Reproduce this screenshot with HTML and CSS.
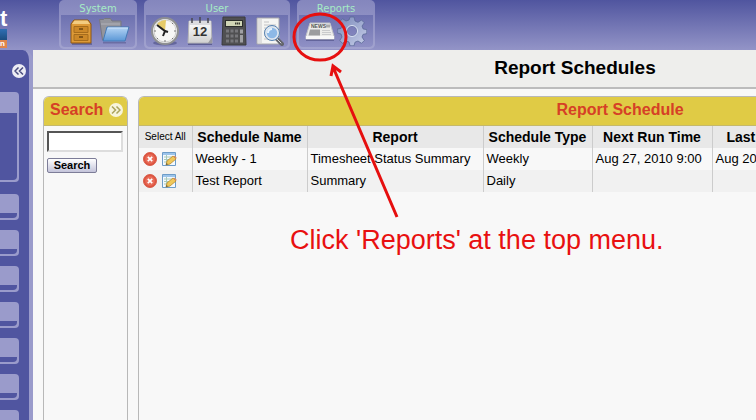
FILE: index.html
```html
<!DOCTYPE html>
<html lang="en">
<head>
    <meta charset="UTF-8">
    <meta name="viewport" content="width=device-width, initial-scale=1.0">
    <title>Report Schedules</title>
    <link rel="stylesheet" href="styles.css">
</head>
<body>
    <svg class="defs" width="0" height="0" aria-hidden="true">
        <defs>
            <linearGradient id="blue" x1="0" y1="0" x2="0" y2="1"><stop offset="0" stop-color="#b5d5f5"/><stop offset="1" stop-color="#5a97d6"/></linearGradient>
            <linearGradient id="grey" x1="0" y1="0" x2="0" y2="1"><stop offset="0" stop-color="#ffffff"/><stop offset="1" stop-color="#d0d0d0"/></linearGradient>
            <linearGradient id="gear" x1="0" y1="0" x2="1" y2="1"><stop offset="0" stop-color="#7787b8"/><stop offset="1" stop-color="#c9d0ea"/></linearGradient>
            <radialGradient id="red"><stop offset="0" stop-color="#ee5a48"/><stop offset="0.6" stop-color="#e8705c"/><stop offset="1" stop-color="#d8402c"/></radialGradient>
            <symbol id="delete" viewBox="0 0 16 16">
                <circle cx="8" cy="8" r="6.5" fill="url(#red)" stroke="#d9604c"/>
                <path d="M5.8 5.8l4.4 4.4M10.2 5.8l-4.4 4.4" stroke="#fff" stroke-width="1.8"/>
            </symbol>
            <symbol id="edit" viewBox="0 0 16 16">
                <path d="M1.5 1.5h13v13h-13z" fill="#f3f9ff" stroke="#6d9cc8"/>
                <path d="M2 2h12v2H2z" fill="#9cc4ea"/>
                <path d="M3 6h9M3 8.5h9M3 11h5M5.5 4v9" stroke="#a9c9b8"/>
                <path d="M5 14l1-4 6-5 3 3-6 5z" fill="#f0c85a" stroke="#b98a2b" stroke-width=".8"/>
                <path d="M5 14l.6-2 1.4 1.3z" fill="#554"/>
                <path d="M12 5l3 3 .7-1.3-2-2z" fill="#d98d62"/>
            </symbol>
        </defs>
    </svg>

    <header class="topbar">
        <div class="logo">
            <div class="logo-name">t</div>
            <div class="logo-blue"></div>
            <div class="logo-orange">n</div>
        </div>
        <nav class="menu">
            <section class="group">
                <h2>System</h2>
                <div class="icons">
                    <a href="#" aria-label="Administration">
                        <svg width="30" height="30" viewBox="0 0 30 30">
                            <path d="M6 27h20v2H6z" fill="#4b4f86" opacity=".6"/>
                            <path d="M8 4h14l3 4v19H5V8z" fill="#dd9a38" stroke="#8d5712"/>
                            <path d="M8.500 4.500h13l2.500 3.500H6z" fill="#f3cc80"/>
                            <path d="M8 10.500h14v6H8zM8 18.500h14v6H8z" fill="#cc8828" stroke="#a66c1c"/>
                            <path d="M13 13h4M13 21h4" stroke="#6d4510" stroke-width="1.500"/>
                        </svg>
                    </a>
                    <a href="#" aria-label="Files">
                        <svg width="32" height="30" viewBox="0 0 32 30">
                            <path d="M5 26h23v1.500H5z" fill="#4b4f86" opacity=".5"/>
                            <path d="M1.500 3.500h4l1-1h6l1.500 2.500h9v19H4.500z" fill="#94959c" stroke="#777880"/>
                            <path d="M3 8h19" stroke="#b0b1b8"/>
                            <path d="M9 11h22l-4 14H5z" fill="url(#blue)" stroke="#4479b5"/>
                            <path d="M10 12h20" stroke="#cfe4fa"/>
                        </svg>
                    </a>
                </div>
            </section>
            <section class="group">
                <h2>User</h2>
                <div class="icons wide">
                    <a href="#" aria-label="Timesheet">
                        <svg width="30" height="30" viewBox="0 0 30 30">
                            <ellipse cx="15" cy="27" rx="12" ry="2.500" fill="#3d4075" opacity=".5"/>
                            <circle cx="15" cy="15" r="13" fill="#f0f0ee" stroke="#8f9092" stroke-width="2"/>
                            <circle cx="15" cy="15" r="11" fill="#f7f7f5" stroke="#cfcfcf"/>
                            <path d="M15 15L7 8q4-4 9-4z" fill="#e6cb68"/>
                            <path d="M7 9l8 6 3 1M15 15l-2 5" fill="none" stroke="#222" stroke-width="2"/>
                            <path d="M15 24v2M24 15h2M4 15h2M22 8l1-1M8 22l-1 1M22 22l1 1" stroke="#777"/>
                        </svg>
                    </a>
                    <a href="#" aria-label="Calendar">
                        <svg width="28" height="30" viewBox="0 0 28 30">
                            <path d="M2 27h24v2H2z" fill="#3d4075" opacity=".6"/>
                            <path d="M3 5h22l1 22H2z" fill="url(#grey)" stroke="#b5b5b8"/>
                            <path d="M3 5h22v4H3z" fill="#dcdce0"/>
                            <path d="M6 7V2M14 7V1M22 7V2" stroke="#4a4a50" stroke-width="1.500"/>
                            <path d="M26 21l-4 6h4z" fill="#9a9aa0"/>
                            <text x="14" y="20" class="day">12</text>
                        </svg>
                    </a>
                    <a href="#" aria-label="Calculator">
                        <svg width="28" height="30" viewBox="0 0 28 30">
                            <path d="M3 1h22l1 28H2z" fill="#505052" stroke="#3a3a3d"/>
                            <path d="M5 4h18v7H5z" fill="#2b2d2b"/>
                            <path d="M6 5h16v5H6z" fill="#d0d5b5"/>
                            <path d="M15 7.500h5" stroke="#34362b" stroke-width="2" stroke-dasharray="1.500 .5"/>
                            <path d="M6 15h12M6 20h12M6 25h12" stroke="#77777b" stroke-width="3" stroke-dasharray="3 1.500"/>
                            <path d="M20 13.500h3v4h-3zM20 19h3v7.500h-3z" fill="#a0a0a4"/>
                        </svg>
                    </a>
                    <a href="#" aria-label="Search records">
                        <svg width="30" height="30" viewBox="0 0 30 30">
                            <path d="M3 2h22v26H3z" fill="#f5f5f3" stroke="#a8a8ac"/>
                            <path d="M4 3h4v24H4z" fill="#dedede"/>
                            <path d="M10 6h5M10 9h12M10 12h5M10 15h3M10 19h2M10 23h5" stroke="#c3c3c5"/>
                            <path d="M22 22l6 6" stroke="#63656c" stroke-width="4" stroke-linecap="round"/>
                            <path d="M22 22l5 5" stroke="#d5d5d8" stroke-linecap="round"/>
                            <circle cx="18" cy="17" r="6.500" fill="#8db9e6" stroke="#dde5ee" stroke-width="2.500"/>
                            <circle cx="18" cy="17" r="7.500" fill="none" stroke="#5681b0"/>
                            <path d="M14 17q0-4 4-4" fill="none" stroke="#e6f3ff" stroke-width="2"/>
                        </svg>
                    </a>
                </div>
            </section>
            <section class="group">
                <h2>Reports</h2>
                <div class="icons">
                    <a href="#" aria-label="Reports">
                        <svg width="30" height="30" viewBox="0 0 30 30">
                            <path d="M1 23h28v2H1z" fill="#3d4075" opacity=".5"/>
                            <path d="M5 7h20l4 13v3H1v-3z" fill="#ececea" stroke="#c0c2c6"/>
                            <path d="M1 20h28v3H1z" fill="#f8f8f8"/>
                            <path d="M5 13.500h10v6H3.500z" fill="#9c9d9f"/>
                            <path d="M17 14.500h8M17 16.500h9M17 18.500h9" stroke="#c9cacc"/>
                            <text x="6" y="12" class="news">NEWS</text>
                            <path d="M21 10h4" stroke="#aaa" stroke-width="3"/>
                        </svg>
                    </a>
                    <a href="#" aria-label="Report settings">
                        <svg width="30" height="30" viewBox="-15 -15 30 30">
                            <path fill="url(#gear)" stroke="#5a6897" stroke-width=".8" fill-rule="evenodd" d="M-2-14h4l1 4 3 1.300 3.500-2.300 2.800 2.800L10-5l1.200 3 3.600.6v4L11 3.400 10 6l2.300 3.500-2.800 2.800L6 10l-3 1.200-1 3.600h-4L-3 11l-3-1-3.500 2.300-2.800-2.800L-10 6l-1-3-3.800-1v-4l3.800-.6L-10-6l-2.300-3.500 2.800-2.800L-6-10l3-1zM0-5a5 5 0 100 10 5 5 0 000-10z"/>
                            <circle r="5.500" fill="none" stroke="#dce3f5"/>
                        </svg>
                    </a>
                </div>
            </section>
        </nav>
    </header>

    <div class="page">
        <aside class="sidebar">
            <button class="round collapse" type="button" aria-label="Collapse sidebar">
                <svg width="10" height="8" viewBox="0 0 10 8"><path d="M4.500 0.500L1 4l3.500 3.500M9 0.500L5.500 4 9 7.500"/></svg>
            </button>
            <div class="box open"></div>
            <div class="box"></div>
            <div class="box"></div>
            <div class="box"></div>
            <div class="box"></div>
            <div class="box"></div>
            <div class="box"></div>
            <div class="box"></div>
        </aside>
        <main class="main">
            <h1>Report Schedules</h1>
            <div class="content">
                <form class="panel search">
                    <div class="panel-head">
                        <label for="search">Search</label>
                        <button class="round" type="button" aria-label="Expand search">
                            <svg width="10" height="8" viewBox="0 0 10 8"><path d="M1 0.500L4.500 4 1 7.500M5.500 0.500L9 4 5.500 7.500"/></svg>
                        </button>
                    </div>
                    <div class="search-body">
                        <input type="text" id="search" name="search">
                        <button class="submit" type="submit">Search</button>
                    </div>
                </form>
                <section class="panel report">
                    <h2 class="panel-head">Report Schedule</h2>
                    <table>
                        <colgroup>
                            <col class="col-select"><col class="col-name"><col class="col-report"><col class="col-type"><col class="col-next"><col>
                        </colgroup>
                        <thead>
                            <tr>
                                <th><a class="select-all" href="#">Select All</a></th>
                                <th>Schedule Name</th>
                                <th>Report</th>
                                <th>Schedule Type</th>
                                <th>Next Run Time</th>
                                <th class="last">Last</th>
                            </tr>
                        </thead>
                        <tbody>
                            <tr>
                                <td><div class="actions">
                                    <button type="button" aria-label="Delete Weekly - 1"><svg width="16" height="16"><use href="#delete"/></svg></button>
                                    <button type="button" aria-label="Edit Weekly - 1"><svg width="16" height="16"><use href="#edit"/></svg></button>
                                </div></td>
                                <td>Weekly - 1</td>
                                <td>Timesheet Status Summary</td>
                                <td>Weekly</td>
                                <td>Aug 27, 2010 9:00</td>
                                <td>Aug 20</td>
                            </tr>
                            <tr>
                                <td><div class="actions">
                                    <button type="button" aria-label="Delete Test Report"><svg width="16" height="16"><use href="#delete"/></svg></button>
                                    <button type="button" aria-label="Edit Test Report"><svg width="16" height="16"><use href="#edit"/></svg></button>
                                </div></td>
                                <td>Test Report</td>
                                <td>Summary</td>
                                <td>Daily</td>
                                <td></td>
                                <td></td>
                            </tr>
                        </tbody>
                    </table>
                </section>
            </div>
        </main>
    </div>

    <!-- callout drawn over the page -->
    <svg class="pointer" width="420" height="230" viewBox="0 0 420 230" aria-hidden="true">
        <ellipse cx="320" cy="37" rx="26" ry="23"/>
        <path d="M397 217L333 67M331 76l2-10 8 6"/>
    </svg>
    <p class="callout">Click 'Reports' at the top menu.</p>
</body>
</html>
```
FILE: styles.css
```css
* {
    box-sizing: border-box;
}
body {
    margin: 0;
    min-height: 100vh;
    display: flex;
    flex-direction: column;
    position: relative;
    overflow: hidden;
    font-family: "Liberation Sans", Arial, sans-serif;
    font-size: 13px;
    color: #000;
    background: #f8f8f8;
}
h1, h2, p {
    margin: 0;
}
button {
    padding: 0;
    border: none;
    background: none;
    cursor: pointer;
}
svg {
    display: block;
}
.defs {
    position: absolute;
}

/* top menu */
.topbar {
    display: flex;
    height: 50px;
    background: linear-gradient(#50559f, #9394c7);
}
.logo {
    width: 59px;
    padding-top: 6px;
    color: #fff;
    font-weight: bold;
}
.logo-name {
    height: 23px;
    font-size: 22px;
    line-height: 26px;
}
.logo-blue {
    width: 7px;
    height: 11px;
    background: linear-gradient(#2f6fb4, #1d4d80);
}
.logo-orange {
    width: 7px;
    height: 8px;
    background: #e0854c;
    font-size: 8px;
    line-height: 8px;
}
.menu {
    display: flex;
    gap: 7px;
    height: 49px;
}
.group {
    min-width: 78px;
    padding: 0 2px 2px;
    border-radius: 5px;
    background: linear-gradient(#8486bd, #a2a3cf);
}
.group h2 {
    height: 15px;
    font: 10px/17px "DejaVu Sans", Verdana, sans-serif;
    text-align: center;
    color: #a5ecc5;
}
.icons {
    display: flex;
    justify-content: center;
    align-items: center;
    gap: 2px;
    height: 32px;
    padding: 0 4px;
    border-radius: 0 0 4px 4px;
    background: linear-gradient(#6d71b0, #8f90c5);
}
.icons.wide {
    gap: 6px;
}
.day {
    font: bold 13px "Liberation Sans", Arial, sans-serif;
    text-anchor: middle;
    fill: #333;
}
.news {
    font: bold 5px "Liberation Sans", Arial, sans-serif;
    fill: #555;
}

/* left bar */
.page {
    display: flex;
    flex: 1;
    background: #9495c8;
}
.sidebar {
    flex: none;
    width: 33px;
    height: 370px;
    overflow: hidden;
    padding-top: 14px;
    border-right: 4px solid #9a9bcb;
    border-radius: 0 10px 0 0;
    background: #5055a0;
}
.round {
    display: flex;
    align-items: center;
    justify-content: center;
    width: 14px;
    height: 14px;
    border-radius: 50%;
    background: #f7f4dc;
}
.round svg {
    fill: none;
    stroke: #aaa45d;
    stroke-width: 1.5;
}
.collapse {
    margin: 0 0 14px 12px;
    background: #ececf4;
}
.collapse svg {
    stroke: #4a4d80;
}
.box {
    width: 19px;
    height: 26px;
    margin-bottom: 10px;
    padding: 19px 2px 2px 0;
    border-radius: 0 4px 4px 0;
    background: #9a9bcb;
}
.box::before {
    content: "";
    display: block;
    height: 100%;
    border-radius: 0 0 4px 0;
    background: #5055a0;
}
.box.open {
    height: 90px;
    margin-bottom: 12px;
    padding-top: 21px;
}

/* main area, wider than small windows */
.main {
    display: flex;
    flex-direction: column;
    flex: 1 0 1084px;
    background: #f8f8f8;
}
.main h1 {
    height: 39px;
    border-bottom: 2px solid #bcbcbc;
    background: #eeeeec;
    font-size: 19px;
    line-height: 35px;
    text-align: center;
}
.content {
    display: flex;
    flex: 1;
    gap: 10px;
    padding: 7px 15px 0 10px;
}
.panel {
    border: 1px solid #b8b8b8;
    border-bottom: none;
    border-radius: 6px 6px 0 0;
}
.panel-head {
    height: 29px;
    border-bottom: 1px solid #c5b96b;
    border-radius: 5px 5px 0 0;
    background: #e0cb45;
    color: #d64026;
    font-size: 16px;
    font-weight: bold;
    line-height: 26px;
    text-align: center;
}
.search {
    flex: none;
    width: 85px;
}
.search .panel-head {
    display: flex;
    align-items: center;
    justify-content: space-between;
    padding: 0 4px 3px 6px;
}
.search-body {
    padding: 5px 3px;
}
.search input {
    display: block;
    width: 76px;
    height: 21px;
    margin-bottom: 5px;
    border: 2px solid;
    border-color: #555 #ddd #ddd #555;
    background: #fff;
}
.submit {
    width: 50px;
    height: 15px;
    border: 1px solid #7d7d98;
    border-radius: 2px;
    background: linear-gradient(#fff, #c4c4da);
    font: bold 11px/12px "Liberation Sans", Arial, sans-serif;
}
.report {
    flex: 1;
}
table {
    width: 100%;
    table-layout: fixed;
    border-collapse: collapse;
}
.col-select {
    width: 53px;
}
.col-name {
    width: 115px;
}
.col-report {
    width: 176px;
}
.col-type {
    width: 109px;
}
.col-next {
    width: 120px;
}
th, td {
    height: 22px;
    padding: 0 3px;
    border-right: 1px solid #ccc;
    line-height: 22px;
    text-align: left;
    white-space: nowrap;
}
th {
    background: #e8e8e8;
    font-size: 14px;
    text-align: center;
}
th.last {
    padding-left: 14px;
    text-align: left;
}
tbody tr:nth-child(even) {
    background: #f1f1f1;
}
.select-all {
    display: block;
    color: #000;
    font-size: 10px;
    font-weight: normal;
    text-decoration: none;
}
.actions {
    display: flex;
    gap: 3px;
}

/* callout */
.pointer {
    position: absolute;
    top: 0;
    left: 0;
    fill: none;
    stroke: #e60f0f;
    stroke-width: 3;
    pointer-events: none;
}
.callout {
    position: absolute;
    top: 225px;
    left: 290px;
    color: #e81010;
    font-size: 27px;
    line-height: 30px;
    white-space: nowrap;
}
```
